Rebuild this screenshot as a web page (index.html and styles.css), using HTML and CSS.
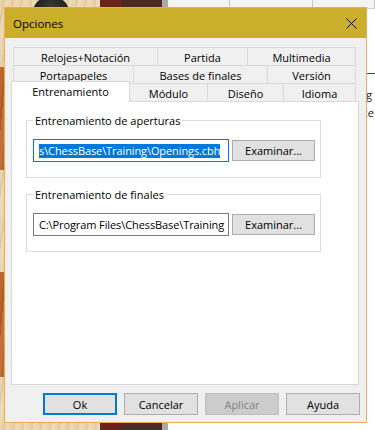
FILE: index.html
```html
<!DOCTYPE html>
<html lang="es">
<head>
    <meta charset="UTF-8">
    <title>Opciones</title>
    <link rel="stylesheet" href="styles.css">
</head>
<body>
<div class="board">
    <div class="sq light"></div><div class="sq dark2"></div>
    <div class="sq dark"></div><div class="sq dark2"></div>
    <div class="sq light"></div><div class="sq dark2"></div>
    <div class="sq dark"></div><div class="sq dark2"></div>
    <div class="sq light"></div><div class="sq dark2"></div>
    <div class="piece"></div>
</div>
<div class="app">
    <div class="app-toolbar">
        <span class="tool"></span><span class="tool"></span><span class="tool"></span>
    </div>
    <div class="app-line"></div>
    <span class="app-text t1">tg</span>
    <span class="app-text t2">xe</span>
</div>

<div class="dialog">
    <div class="titlebar">
        <span class="title">Opciones</span>
        <svg class="close" width="11" height="11" viewBox="0 0 11 11">
            <path d="M0.5 0.5 L10.5 10.5 M10.5 0.5 L0.5 10.5" stroke="#000" stroke-width="1" fill="none"/>
        </svg>
    </div>

    <div class="tabs">
        <div class="tab-row">
            <div class="tab t-relojes">Relojes+Notación</div>
            <div class="tab t-partida">Partida</div>
            <div class="tab t-multimedia">Multimedia</div>
        </div>
        <div class="tab-row">
            <div class="tab t-portapapeles">Portapapeles</div>
            <div class="tab t-bases">Bases de finales</div>
            <div class="tab t-version">Versión</div>
        </div>
        <div class="tab-row last">
            <div class="tab active">Entrenamiento</div>
            <div class="tab t-modulo">Módulo</div>
            <div class="tab t-diseno">Diseño</div>
            <div class="tab t-idioma">Idioma</div>
        </div>
    </div>

    <div class="panel">
        <fieldset class="group">
            <legend>Entrenamiento de aperturas</legend>
            <div class="field-row">
                <div class="path focused"><span class="sel">s\ChessBase\Training\Openings.cbh</span></div>
                <button class="btn browse">Examinar...</button>
            </div>
        </fieldset>
        <fieldset class="group second">
            <legend>Entrenamiento de finales</legend>
            <div class="field-row">
                <div class="path">C:\Program Files\ChessBase\Training</div>
                <button class="btn browse">Examinar...</button>
            </div>
        </fieldset>
    </div>

    <div class="footer">
        <button class="btn default">Ok</button>
        <button class="btn">Cancelar</button>
        <button class="btn disabled">Aplicar</button>
        <button class="btn">Ayuda</button>
    </div>
</div>
</body>
</html>
```

FILE: styles.css
```css
body {
    margin: 0;
    width: 375px;
    height: 430px;
    position: relative;
    overflow: hidden;
    background: #ffffff;
    font-family: "Open Sans", "Noto Sans", sans-serif;
    font-size: 11px;
    color: #000;
}

/* background: chess board and the main window behind the dialog */
.board {
    position: absolute;
    left: 0;
    top: 0;
    width: 162px;
    height: 430px;
    display: grid;
    grid-template-columns: 100px 62px;
    grid-template-rows: 67px 103px 102px 105px 53px;
}
.sq.light {
    background: repeating-linear-gradient(100deg, #e9d4ae 0 3px, #e2c9a0 3px 5px, #ecd9b6 5px 9px);
}
.sq.dark {
    background: repeating-linear-gradient(95deg, #b9672c 0 4px, #ad5b24 4px 6px, #c0723a 6px 10px);
}
.sq.dark2 {
    background: linear-gradient(to right, #6b2217 0 21px, #4a2b22 21px);
}
.piece {
    position: absolute;
    left: 32px;
    top: -4px;
    width: 38px;
    height: 38px;
    border-radius: 50%;
    background: radial-gradient(circle at 50% 30%, #3a3a3a, #151515 70%);
}

.app {
    position: absolute;
    left: 162px;
    top: 0;
    right: 0;
    bottom: 0;
    background: #ffffff;
    border-left: 6px solid #a9a9a9;
}
.app-toolbar {
    height: 8px;
    background: #ececec;
    border-bottom: 1px solid #d0d0d0;
    display: flex;
}
.tool {
    width: 64px;
    border-right: 1px solid #c8c8c8;
    background: #f4f4f4;
}
.tool:nth-child(2) {
    width: 87px;
}
/* offsets below are inside .app, which starts at x 168 */
.app-line {
    position: absolute;
    left: 190px;
    right: 0;
    top: 73px;
    height: 1px;
    background: #2b3fbf;
}
.app-text {
    position: absolute;
    left: 194px;
    font-size: 11px;
    line-height: 14px;
    color: #222;
}
.app-text.t1 {
    top: 88px;
}
.app-text.t2 {
    top: 106px;
}

/* dialog window */
.dialog {
    position: absolute;
    left: 4px;
    top: 7px;
    width: 363px;
    height: 416px;
    box-sizing: border-box;
    border: 1px solid #eeaa4c;
    background: #f0f0f0;
    display: flex;
    flex-direction: column;
}
.titlebar {
    height: 30px;
    flex: none;
    background: #cbae2a;
    display: flex;
    align-items: center;
    justify-content: space-between;
    padding: 0 9px 0 8px;
}
.title {
    font-size: 11.5px;
}
.close {
    display: block;
}

.tabs {
    margin: 9px 0 0 8px;
    display: flex;
    flex-direction: column;
}
.tab-row {
    display: flex;
}
.tab-row + .tab-row {
    margin-top: -1px;
}
.tab-row.last {
    height: 19px;
    align-items: flex-end;
}
.tab {
    height: 19px;
    box-sizing: border-box;
    border: 1px solid #d9d9d9;
    background: #f0f0f0;
    display: flex;
    align-items: center;
    justify-content: center;
    padding-top: 1px;
    white-space: nowrap;
}
.tab + .tab {
    margin-left: -1px;
}
.t-relojes { width: 145px; }
.t-partida { width: 91px; }
.t-multimedia { width: 109px; }
.t-portapapeles { width: 121px; }
.t-bases { width: 135px; }
.t-version { width: 89px; }
.t-modulo { width: 79px; }
.t-diseno { width: 77px; }
.t-idioma { width: 73px; }
.tab.active {
    width: 119px;
    height: 21px;
    margin-left: -2px;
    border-bottom: none;
    background: #ffffff;
    position: relative;
    z-index: 1;
    padding: 0 0 1px;
}

.panel {
    margin: -1px 7px 0 6px;
    height: 284px;
    box-sizing: border-box;
    border: 1px solid #d9d9d9;
    background: #ffffff;
    padding: 11px 0 0 14px;
}
.group {
    width: 295px;
    box-sizing: border-box;
    margin: 0;
    border: 1px solid #dcdcdc;
    padding: 11px 5px 15px 6px;
}
.group.second {
    margin-top: 9px;
}
.group legend {
    padding: 0 2px;
    line-height: 15px;
}
.field-row {
    display: flex;
    align-items: center;
    gap: 3px;
}
.path {
    width: 196px;
    height: 23px;
    box-sizing: border-box;
    border: 1px solid #7a7a7a;
    background: #ffffff;
    padding-left: 5px;
    display: flex;
    align-items: center;
    white-space: nowrap;
    overflow: hidden;
    letter-spacing: -0.1px;
}
.path.focused {
    border-color: #0078d7;
}
.sel {
    background: #0078d7;
    color: #ffffff;
    line-height: 14px;
}

.btn {
    height: 22px;
    box-sizing: border-box;
    border: 1px solid #adadad;
    background: #e1e1e1;
    font-family: inherit;
    font-size: 11px;
    color: #000;
    padding: 0;
}
.btn.browse {
    width: 83px;
    height: 21px;
}
.footer {
    margin-top: 8px;
    display: flex;
    justify-content: flex-end;
    gap: 7px;
    padding-right: 6px;
}
.footer .btn {
    width: 74px;
}
.btn.default {
    border: 2px solid #0078d7;
}
.btn.disabled {
    background: #cccccc;
    border-color: #bfbfbf;
    color: #838383;
}
```
